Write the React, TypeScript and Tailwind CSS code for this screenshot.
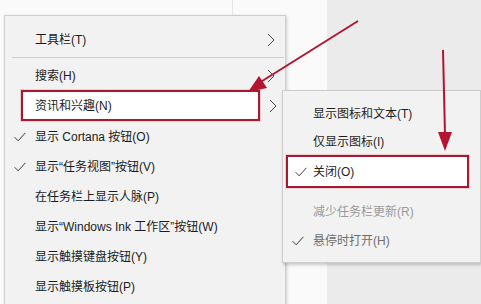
import React from "react";

type Item =
  | { sep: true }
  | { label: string; sub?: boolean; check?: boolean; hl?: boolean; h?: string };

const mainItems: Item[] = [
  { label: "工具栏(T)", sub: true, h: "h-[30px]" },
  { sep: true },
  { label: "搜索(H)", sub: true, h: "h-[28px]" },
  { label: "资讯和兴趣(N)", sub: true, hl: true, h: "h-[32px]" },
  { label: "显示 Cortana 按钮(O)", check: true },
  { label: "显示“任务视图”按钮(V)", check: true },
  { label: "在任务栏上显示人脉(P)" },
  { label: "显示“Windows Ink 工作区”按钮(W)" },
  { label: "显示触摸键盘按钮(Y)" },
  { label: "显示触摸板按钮(P)" },
];

function Check() {
  return (
    <svg width="12" height="10" viewBox="0 0 12 10">
      <path d="M0.6 5.2 L4.2 8.8 L11.4 0.8" fill="none" stroke="#3c3c3c" strokeWidth="1" />
    </svg>
  );
}

function Chevron() {
  return (
    <svg width="8" height="14" viewBox="0 0 8 14">
      <path d="M1 1 L7 7 L1 13" fill="none" stroke="#4a4a4a" strokeWidth="1" />
    </svg>
  );
}

function MainMenu() {
  return (
    <div className="absolute left-[4px] top-[15px] w-[282px] h-[300px] bg-[#f2f2f2] border border-[#cdcdcd] shadow-[1px_1px_3px_rgba(0,0,0,0.18)] pt-[9px] flex flex-col">
      {mainItems.map((it, i) => {
        if ("sep" in it) {
          return (
            <div key={i} className="h-[7px] pt-[2px] pl-[7px] pr-[1px]">
              <div className="h-px bg-[#cccccc]" />
            </div>
          );
        }
        if (it.hl) {
          return (
            <div key={i} className={`${it.h} flex items-start`}>
              <div className="ml-[16px] w-[239px] h-[31px] bg-white border-2 border-[#a8182f] shadow-[0_0_0_1px_rgba(225,140,150,0.35)] flex items-center pl-[12px] text-[#1b1b1b]">
                {it.label}
              </div>
              <div className="h-[31px] flex items-center ml-[9px]">
                <Chevron />
              </div>
            </div>
          );
        }
        return (
          <div key={i} className={`${it.h ?? "h-[30px]"} flex items-center text-[#1b1b1b]`}>
            <div className="w-[30px] flex justify-center">{it.check && <Check />}</div>
            <span className="flex-1">{it.label}</span>
            {it.sub && (
              <div className="mr-[10px] flex items-center">
                <Chevron />
              </div>
            )}
          </div>
        );
      })}
    </div>
  );
}

function SubMenu() {
  return (
    <div className="absolute left-[282px] top-[90px] w-[199px] h-[173px] bg-[#f2f2f2] border border-[#cdcdcd] shadow-[1px_2px_3px_rgba(0,0,0,0.2)] pt-[8px] pb-[8px] flex flex-col">
      <div className="h-[30px] flex items-center pl-[30px] text-[#1f1f1f]">显示图标和文本(T)</div>
      <div className="h-[26px] flex items-center pl-[30px] text-[#1f1f1f]">仅显示图标(I)</div>
      <div className="h-[33px] ml-[3px] w-[183px] bg-white border-2 border-[#a8182f] shadow-[0_0_0_1px_rgba(225,140,150,0.35)] flex items-center text-[#1f1f1f]">
        <div className="w-[25px] flex justify-center">
          <Check />
        </div>
        <span>关闭(O)</span>
      </div>
      <div className="h-[9px]" />
      <div className="h-[30px] flex items-center pl-[30px] text-[#9a9a9a]">减少任务栏更新(R)</div>
      <div className="h-[27px] flex items-center text-[#6e6e6e]">
        <div className="w-[30px] flex justify-center">
          <Check />
        </div>
        <span>悬停时打开(H)</span>
      </div>
    </div>
  );
}

function Arrows() {
  const red = "#b3142f";
  return (
    <svg className="absolute left-0 top-0 pointer-events-none" width="481" height="304" viewBox="0 0 481 304">
      <line x1="358" y1="21" x2="259" y2="83" stroke={red} strokeWidth="2" />
      <polygon points="248,92 259,76 267,88" fill={red} />
      <line x1="443" y1="50" x2="445" y2="135" stroke={red} strokeWidth="2" />
      <polygon points="438,132 452,132 445,151" fill={red} />
    </svg>
  );
}

export default function App() {
  return (
    <div className="relative w-[481px] h-[304px] overflow-hidden flex text-[12px] font-[family-name:'Liberation_Sans','Noto_Sans_CJK_SC',sans-serif]">
      <div className="w-[327px] bg-[#fafafa] flex">
        <div className="ml-[232px] w-px h-[15px] bg-[#e6e6e6]" />
      </div>
      <div className="flex-1 bg-[#ebebeb]" />
      <MainMenu />
      <SubMenu />
      <Arrows />
    </div>
  );
}
